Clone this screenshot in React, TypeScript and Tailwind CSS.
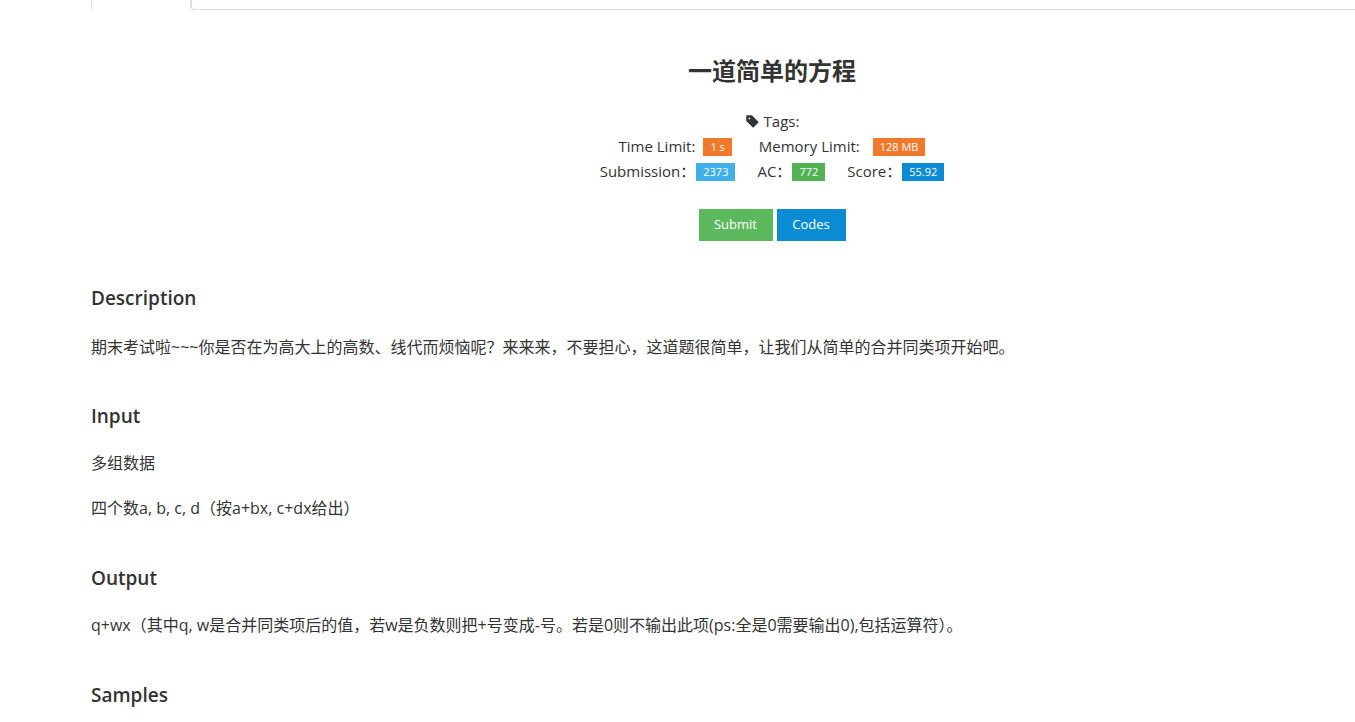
export default function App() {
  const f = { fontFamily: '"Open Sans","Noto Sans CJK SC",sans-serif' };
  return (
    <div className="bg-white min-h-[722px] text-[#333] text-[15px]" style={f}>
      <div className="flex h-[10px] pl-[91px]">
        <div className="w-[100px] h-[10px] border-x border-[#ddd] rounded-b-sm"></div>
        <div className="flex-1 h-[10px] border-b border-l border-[#ddd] rounded-bl-sm"></div>
      </div>
      <div className="pl-[91px] pr-[10px]">
        <div className="flex flex-col items-center pl-[108px]">
          <h1 className="text-[24px] font-bold text-[#333] mt-[44px] leading-[34px]">一道简单的方程</h1>
          <div className="mt-[21px] flex items-center gap-1 leading-[25px]">
            <svg width="15" height="15" viewBox="0 0 24 24" fill="#333"><path d="M2 3v8l11 11 9-9L11 2H3a1 1 0 0 0-1 1zm5 2.5a1.5 1.5 0 1 1 0 3 1.5 1.5 0 0 1 0-3z"/></svg>
            <span>Tags:</span>
          </div>
          <div className="flex items-center leading-[25px]">
            <span>Time Limit:</span>
            <span className="ml-[8px] bg-[#f0792b] text-white text-[11px] px-[7px] leading-[18px]">1 s</span>
            <span className="ml-[27px]">Memory Limit:</span>
            <span className="ml-[13px] bg-[#f0792b] text-white text-[11px] px-[7px] leading-[18px]">128 MB</span>
          </div>
          <div className="flex items-center leading-[25px]">
            <span>Submission：</span>
            <span className="ml-[1px] bg-[#3fb0e8] text-white text-[11px] px-[7px] leading-[18px]">2373</span>
            <span className="ml-[22px]">AC：</span>
            <span className="ml-[1px] bg-[#52b152] text-white text-[11px] px-[7px] leading-[18px]">772</span>
            <span className="ml-[22px]">Score：</span>
            <span className="ml-[1px] bg-[#0b8bd2] text-white text-[11px] px-[7px] leading-[18px]">55.92</span>
          </div>
          <div className="flex gap-[4px] mt-[25px]">
            <button className="bg-[#5cb85c] text-white text-[13px] w-[74px] h-[32px]">Submit</button>
            <button className="bg-[#0b8bd2] text-white text-[13px] w-[69px] h-[32px]">Codes</button>
          </div>
        </div>
        <h2 className="text-[19px] font-semibold mt-[45px] leading-[24px]">Description</h2>
        <p className="mt-[25px] text-[16px] leading-[24px]">期末考试啦~~~你是否在为高大上的高数、线代而烦恼呢？来来来，不要担心，这道题很简单，让我们从简单的合并同类项开始吧。</p>
        <h2 className="text-[19px] font-semibold mt-[45px] leading-[24px]">Input</h2>
        <p className="mt-[23px] text-[16px] leading-[24px]">多组数据</p>
        <p className="mt-[21px] text-[16px] leading-[24px]">四个数a, b, c, d（按a+bx, c+dx给出）</p>
        <h2 className="text-[19px] font-semibold mt-[46px] leading-[24px]">Output</h2>
        <p className="mt-[23px] text-[16px] leading-[24px]">q+wx（其中q, w是合并同类项后的值，若w是负数则把+号变成-号。若是0则不输出此项(ps:全是0需要输出0),包括运算符）。</p>
        <h2 className="text-[19px] font-semibold mt-[46px] leading-[24px]">Samples</h2>
      </div>
    </div>
  );
}
